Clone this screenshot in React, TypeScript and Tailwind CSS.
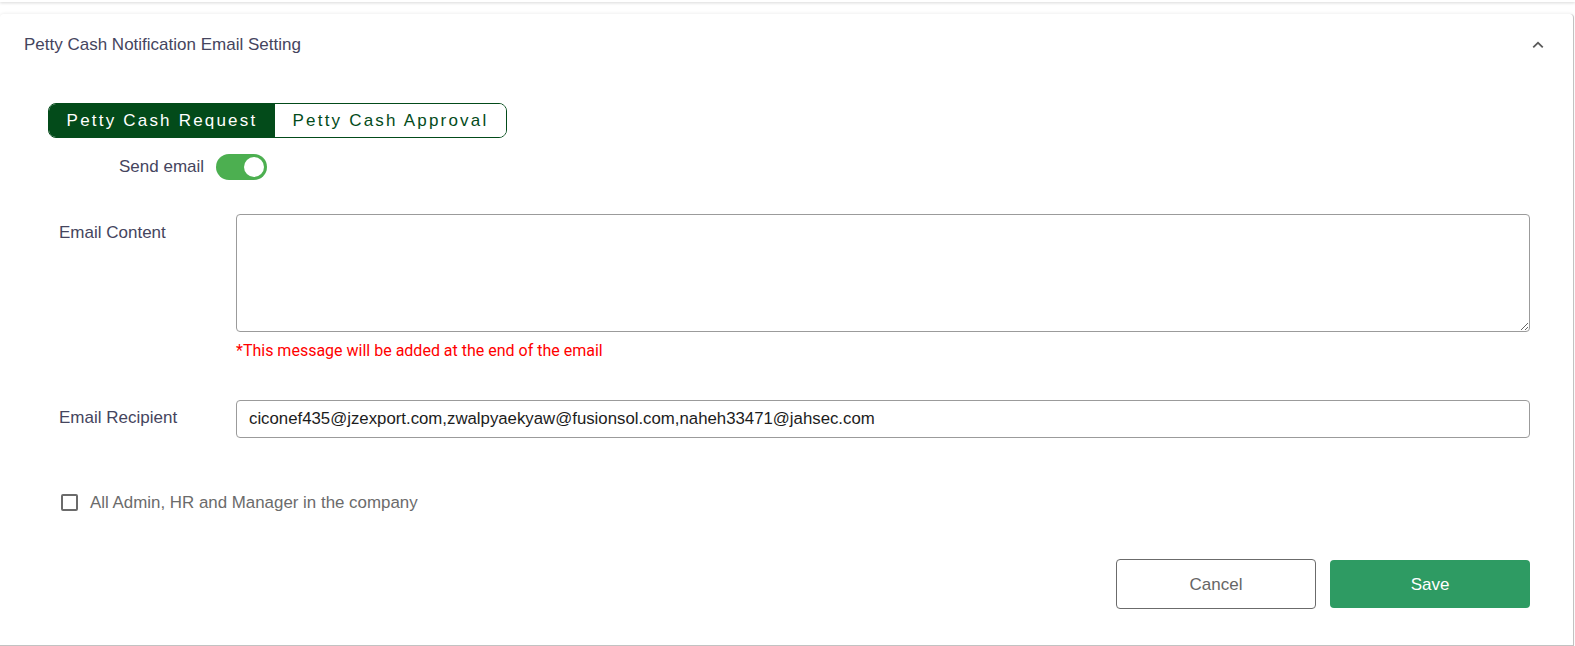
import React, { useState } from 'react';

const labelCls = "text-[17px] text-[#45455e]";

function Toggle({ on, onChange }: { on: boolean; onChange: () => void }) {
    return (
        <button
            onClick={onChange}
            className={
                "relative w-[51px] h-[26px] rounded-full transition-colors " +
                (on ? "bg-[#4caf50]" : "bg-[#c7c7c7]")
            }
        >
            <span
                className={
                    "absolute top-[3px] h-[20px] w-[20px] rounded-full bg-white transition-all " +
                    (on ? "left-[28px]" : "left-[3px]")
                }
            />
        </button>
    );
}

export default function App() {
    const [tab, setTab] = useState<'request' | 'approval'>('request');
    const [sendEmail, setSendEmail] = useState(true);
    const [allAdmins, setAllAdmins] = useState(false);
    const [recipients, setRecipients] = useState(
        "ciconef435@jzexport.com,zwalpyaekyaw@fusionsol.com,naheh33471@jahsec.com"
    );

    return (
        <div className="w-full min-h-[646px] bg-white font-['Liberation_Sans',Arial,sans-serif] overflow-hidden">
            <div className="h-[2px] bg-white shadow-[0_1px_3px_rgba(0,0,0,0.18)]" />

            <div className="mt-[12px] w-[1574px] h-[632px] bg-white rounded-t-[4px] border-r border-b border-[#c2c2c2] shadow-[0_-1px_3px_rgba(0,0,0,0.06)] flex flex-col">
                {/* header */}
                <div className="h-[62px] flex items-center justify-between pl-6 pr-[23px]">
                    <span className="text-[17px] text-[#45455e]">Petty Cash Notification Email Setting</span>
                    <svg width="24" height="24" viewBox="0 0 24 24" className="text-[#5a5a5a]">
                        <path fill="currentColor" d="M7.41 15.41 12 10.83l4.59 4.58L18 14l-6-6-6 6z" transform="translate(12 12) scale(0.9) translate(-12 -12)" />
                    </svg>
                </div>

                <div className="pl-12 pr-[43px] pt-[27px]">
                    {/* tabs */}
                    <div className="flex w-fit h-[35px] rounded-[8px] border border-[#034b1a] overflow-hidden">
                        <button
                            onClick={() => setTab('request')}
                            className={
                                "w-[226px] text-[17px] tracking-[2.2px] " +
                                (tab === 'request' ? "bg-[#034b1a] text-white" : "bg-white text-[#034b1a]")
                            }
                        >
                            Petty Cash Request
                        </button>
                        <button
                            onClick={() => setTab('approval')}
                            className={
                                "w-[231px] text-[17px] tracking-[2.2px] " +
                                (tab === 'approval' ? "bg-[#034b1a] text-white" : "bg-white text-[#034b1a]")
                            }
                        >
                            Petty Cash Approval
                        </button>
                    </div>

                    {/* send email */}
                    <div className="mt-[16px] pl-[71px] flex items-center gap-3">
                        <span className={labelCls}>Send email</span>
                        <Toggle on={sendEmail} onChange={() => setSendEmail(!sendEmail)} />
                    </div>

                    {/* email content */}
                    <div className="mt-[34px] flex">
                        <div className="w-[188px] pl-[11px] pt-[6px] shrink-0">
                            <span className={labelCls}>Email Content</span>
                        </div>
                        <div className="flex-1">
                            <textarea className="block w-full h-[118px] rounded-[4px] border border-[#9b9b9b] outline-none px-3 py-2 text-[17px] resize-y" />
                            <p className="mt-[7px] text-[16px] leading-[24px] text-[#ff0000] font-['Roboto',sans-serif]">
                                *This message will be added at the end of the email
                            </p>
                        </div>
                    </div>

                    {/* recipients */}
                    <div className="mt-[37px] flex">
                        <div className="w-[188px] pl-[11px] pt-[5px] shrink-0">
                            <span className={labelCls}>Email Recipient</span>
                        </div>
                        <input
                            value={recipients}
                            onChange={(e) => setRecipients(e.target.value)}
                            className="flex-1 h-[38px] rounded-[4px] border border-[#9b9b9b] outline-none px-3 text-[16.8px] text-[#1c1c1c]"
                        />
                    </div>

                    {/* checkbox */}
                    <label className="mt-[52px] pl-[13px] flex items-center gap-3 cursor-pointer w-fit">
                        <span
                            onClick={() => setAllAdmins(!allAdmins)}
                            className={
                                "w-[17px] h-[17px] rounded-[2px] border-2 border-[#6b6b6b] " +
                                (allAdmins ? "bg-[#6b6b6b]" : "bg-white")
                            }
                        />
                        <span className="text-[16.9px] text-[#6b6b6b]">All Admin, HR and Manager in the company</span>
                    </label>

                    {/* actions */}
                    <div className="mt-[44px] flex justify-end items-center gap-[14px]">
                        <button className="w-[200px] h-[50px] rounded-[4px] border border-[#6b6b6b] bg-white text-[17px] text-[#666]">
                            Cancel
                        </button>
                        <button className="w-[200px] h-[48px] rounded-[4px] bg-[#2e9b63] text-[17px] text-white font-medium">
                            Save
                        </button>
                    </div>
                </div>
            </div>
        </div>
    );
}
